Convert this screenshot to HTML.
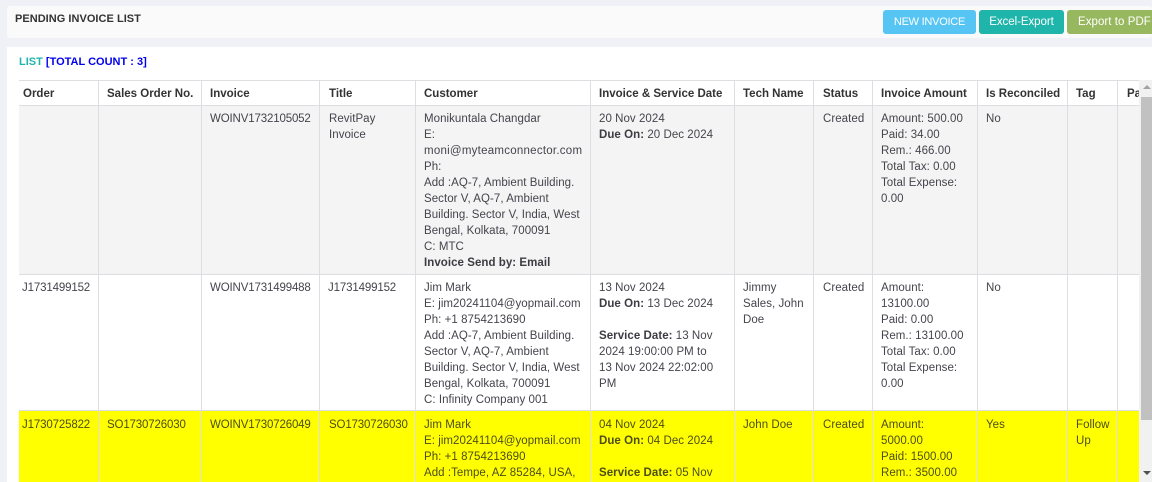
<!DOCTYPE html>
<html><head><meta charset="utf-8"><style>
html,body{margin:0;padding:0}
body{width:1152px;height:482px;overflow:hidden;position:relative;background:#f0f1f6;font-family:"Liberation Sans",sans-serif;font-size:11.5px;letter-spacing:.05px;color:#44444c}
div{position:absolute;box-sizing:border-box}
.t{line-height:16px;white-space:nowrap}
.id{letter-spacing:-.15px}
.h{font-weight:bold;color:#333;top:87px;line-height:15px;white-space:nowrap;letter-spacing:0;font-size:11.5px}
.v{width:1px;background:#dedee2}
.y{color:#4d4d18}
.b{color:#fff;text-align:center;line-height:25px;height:24px;top:10px;border-radius:3px;white-space:nowrap}
b{color:#3c3c42}
</style></head><body>
<div style="left:7px;top:6px;width:1145px;height:32px;background:#fafafb;border-radius:3px"></div>
<div class="t" style="left:15px;top:11px;font-weight:bold;color:#333;font-size:11px;letter-spacing:.03px">PENDING INVOICE LIST</div>
<div class="b" style="left:883px;width:93px;background:#56c5f4;font-size:11px;letter-spacing:-.25px">NEW INVOICE</div>
<div class="b" style="left:979px;width:85px;background:#20b5ab;font-size:11.5px;letter-spacing:-.05px">Excel-Export</div>
<div class="b" style="left:1067px;width:90px;background:#97b85f;text-align:left;padding-left:11px;font-size:11.5px">Export to PDF</div>

<div style="left:7px;top:47px;width:1145px;height:435px;background:#fff"></div>
<div class="t" style="left:19px;top:54px;font-weight:bold;font-size:11px;color:#0000ee;letter-spacing:0"><span style="color:#20b5ab">LIST</span> [TOTAL COUNT : 3]</div>

<div style="left:19px;top:105px;width:1120px;height:169px;background:#f4f4f4"></div>
<div style="left:19px;top:411px;width:1120px;height:71px;background:#ffff00"></div>
<div style="left:19px;top:80px;width:1120px;height:1px;background:#dedee2"></div>
<div style="left:19px;top:105px;width:1120px;height:1px;background:#dedee2"></div>
<div style="left:19px;top:274px;width:1120px;height:1px;background:#dedee2"></div>
<div style="left:19px;top:410px;width:1120px;height:1px;background:#dedee2"></div>

<div class="v" style="left:98px;top:80px;height:402px"></div>
<div class="v" style="left:201px;top:80px;height:402px"></div>
<div class="v" style="left:319px;top:80px;height:402px"></div>
<div class="v" style="left:415px;top:80px;height:402px"></div>
<div class="v" style="left:590px;top:80px;height:402px"></div>
<div class="v" style="left:734px;top:80px;height:402px"></div>
<div class="v" style="left:813px;top:80px;height:402px"></div>
<div class="v" style="left:872px;top:80px;height:402px"></div>
<div class="v" style="left:977px;top:80px;height:402px"></div>
<div class="v" style="left:1067px;top:80px;height:402px"></div>
<div class="v" style="left:1117px;top:80px;height:402px"></div>

<div class="h" style="left:23px">Order</div>
<div class="h" style="left:107px">Sales Order No.</div>
<div class="h" style="left:210px">Invoice</div>
<div class="h" style="left:329px">Title</div>
<div class="h" style="left:424px">Customer</div>
<div class="h" style="left:599px">Invoice &amp; Service Date</div>
<div class="h" style="left:743px">Tech Name</div>
<div class="h" style="left:823px">Status</div>
<div class="h" style="left:881px">Invoice Amount</div>
<div class="h" style="left:986px">Is Reconciled</div>
<div class="h" style="left:1076px">Tag</div>
<div class="h" style="left:1127px;width:12px;overflow:hidden">Pa</div>

<div class="t id" style="left:210px;top:111px">WOINV1732105052</div>
<div class="t" style="left:329px;top:111px">RevitPay<br>Invoice</div>
<div class="t" style="left:424px;top:111px">Monikuntala Changdar<br>E:<br><span style="letter-spacing:.25px">moni@myteamconnector.com</span><br>Ph:<br>Add :AQ-7, Ambient Building.<br>Sector V, AQ-7, Ambient<br>Building. Sector V, India, West<br>Bengal, Kolkata, 700091<br>C: MTC<br><b>Invoice Send by: Email</b></div>
<div class="t" style="left:599px;top:111px">20 Nov 2024<br><b>Due On:</b> 20 Dec 2024</div>
<div class="t" style="left:823px;top:111px">Created</div>
<div class="t" style="left:881px;top:111px">Amount: 500.00<br>Paid: 34.00<br>Rem.: 466.00<br>Total Tax: 0.00<br>Total Expense:<br>0.00</div>
<div class="t" style="left:986px;top:111px">No</div>

<div class="t id" style="left:22px;top:280px">J1731499152</div>
<div class="t id" style="left:210px;top:280px">WOINV1731499488</div>
<div class="t id" style="left:328px;top:280px">J1731499152</div>
<div class="t" style="left:424px;top:280px">Jim Mark<br>E: jim20241104@yopmail.com<br>Ph: +1 8754213690<br>Add :AQ-7, Ambient Building.<br>Sector V, AQ-7, Ambient<br>Building. Sector V, India, West<br>Bengal, Kolkata, 700091<br>C: Infinity Company 001</div>
<div class="t" style="left:599px;top:280px">13 Nov 2024<br><b>Due On:</b> 13 Dec 2024<br><br><b>Service Date:</b> 13 Nov<br>2024 19:00:00 PM to<br>13 Nov 2024 22:02:00<br>PM</div>
<div class="t" style="left:743px;top:280px">Jimmy<br>Sales, John<br>Doe</div>
<div class="t" style="left:823px;top:280px">Created</div>
<div class="t" style="left:881px;top:280px">Amount:<br>13100.00<br>Paid: 0.00<br>Rem.: 13100.00<br>Total Tax: 0.00<br>Total Expense:<br>0.00</div>
<div class="t" style="left:986px;top:280px">No</div>

<div class="t y id" style="left:22px;top:417px">J1730725822</div>
<div class="t y id" style="left:107px;top:417px">SO1730726030</div>
<div class="t y id" style="left:210px;top:417px">WOINV1730726049</div>
<div class="t y id" style="left:329px;top:417px">SO1730726030</div>
<div class="t y" style="left:424px;top:417px">Jim Mark<br>E: jim20241104@yopmail.com<br>Ph: +1 8754213690<br>Add :Tempe, AZ 85284, USA,</div>
<div class="t y" style="left:599px;top:417px">04 Nov 2024<br><b style="color:#4d4d18">Due On:</b> 04 Dec 2024<br><br><b style="color:#4d4d18">Service Date:</b> 05 Nov</div>
<div class="t y" style="left:743px;top:417px">John Doe</div>
<div class="t y" style="left:823px;top:417px">Created</div>
<div class="t y" style="left:881px;top:417px">Amount:<br>5000.00<br>Paid: 1500.00<br>Rem.: 3500.00</div>
<div class="t y" style="left:986px;top:417px">Yes</div>
<div class="t y" style="left:1076px;top:417px">Follow<br>Up</div>

<div style="left:1139px;top:80px;width:13px;height:402px;background:#f1f1f1"></div>
<div style="left:1141px;top:97px;width:11px;height:323px;background:#c1c1c1"></div>
<div style="left:1143px;top:85px;width:0;height:0;border-left:4px solid transparent;border-right:4px solid transparent;border-bottom:4px solid #a3a3a3"></div>
<div style="left:1143px;top:471px;width:0;height:0;border-left:4px solid transparent;border-right:4px solid transparent;border-top:4px solid #505050"></div>
</body></html>
